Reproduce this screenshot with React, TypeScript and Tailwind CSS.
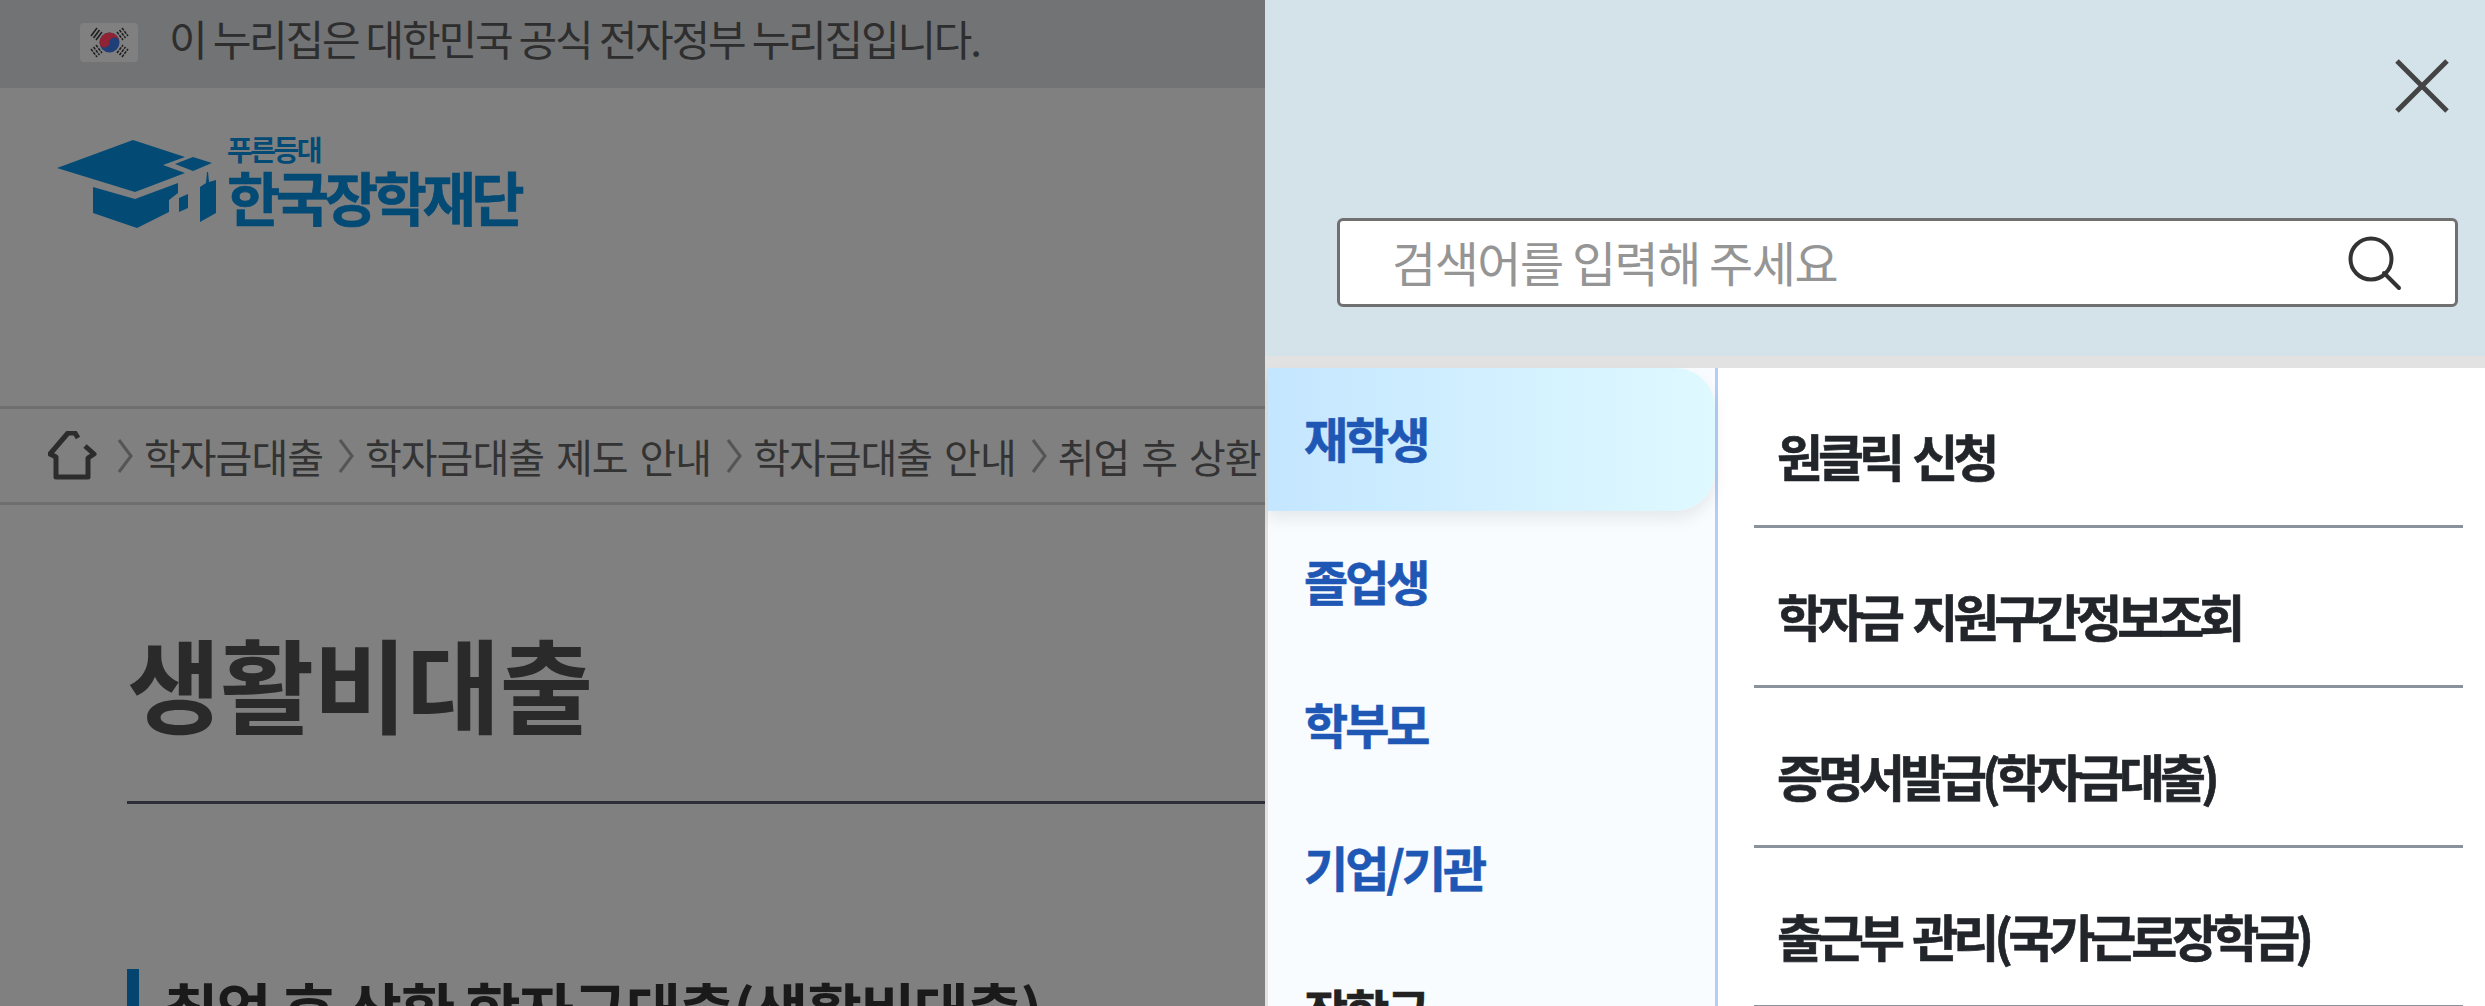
const sideItems = ["재학생", "졸업생", "학부모", "기업/기관", "장학금"]
const links = ["원클릭 신청", "학자금 지원구간정보조회", "증명서발급(학자금대출)", "출근부 관리(국가근로장학금)"]
const crumbs = ["학자금대출", "학자금대출 제도 안내", "학자금대출 안내", "취업 후 상환 학자금대출"]

function Flag() {
  return (
    <div className="w-[58px] h-[39px] mb-[3px] bg-[#808080] rounded-sm flex items-center justify-center">
      <svg viewBox="0 0 57 39" className="w-[57px] h-[39px]">
        <circle cx="28.500" cy="19.500" r="10" fill="#1f3f78" />
        <path d="M18.500 19.500a10 10 0 0 1 20 0c0-3-2.200-5-5-5s-5 2.500-5 5-2.200 5-5 5-5-2-5-5z" fill="#8f2233" />
        <g stroke="#1c1c1c" strokeWidth="1.500">
          <path d="M10 13l6-8M12.500 15l6-8M15 17l6-8" />
          <path d="M36 9l6 8M38.500 7l6 8M41 5l6 8" strokeDasharray="3 1" />
          <path d="M10 26l6 8M12.500 24l6 8M15 22l6 8" strokeDasharray="3 1" />
          <path d="M36 30l6-8M38.500 32l6-8M41 34l6-8" strokeDasharray="3 1" />
        </g>
      </svg>
    </div>
  )
}

function Logo() {
  return (
    <div className="flex items-start gap-[10px] pl-[57px] pt-[52px]">
      <svg viewBox="7 15 160 88" className="w-[160px] h-[88px] fill-[#034a75]">
        <path d="M83 15 L135 32 L113 40 L135 48 L85 67 L7 43 Z" />
        <path d="M143 32 L162 38 L143 46 L125 39 Z" />
        <path d="M43 62 L85 74 L128 58 L128 68 L119 75 L119 87 L87 103 L43 88 Z" />
        <path d="M129 73 L138 69 L138 83 L129 87 Z" />
        <path d="M150 62 L156 58 L157 47 L158 47 L159 57 L166 55 L166 88 L150 97 Z" />
      </svg>
      <div className="flex flex-col text-[#034a75] font-bold leading-none mt-[-8px]">
        <span className="text-[28px] tracking-[-2.500px] h-[36px] leading-[34px]">푸른등대</span>
        <span className="text-[58px] tracking-[-4.500px] leading-[60px] mt-[-2px] [-webkit-text-stroke:0.6px_#034a75]">한국장학재단</span>
      </div>
    </div>
  )
}

function Breadcrumb() {
  return (
    <div className="h-[99px] border-y-[3px] border-[#6f6f6f] flex items-center pl-[48px] whitespace-nowrap overflow-hidden">
      <svg viewBox="8 10 54 50" className="w-[54px] h-[50px] shrink-0 fill-none stroke-[#2c2c2c] stroke-[5]">
        <path d="M38 17 L35 12 L28 12 L10 33 L16 36 L16 56 L48 56 L48 37 L54 33 L45 25" strokeLinejoin="round" />
      </svg>
      {crumbs.map((c) => (
        <div key={c} className="flex items-center shrink-0">
          <svg viewBox="0 0 16 34" className="w-[16px] h-[34px] ml-[15px] mr-[11px] fill-none stroke-[#555555] stroke-[3]">
            <path d="M2 1 L14 17 L2 33" />
          </svg>
          <span className="text-[40px] tracking-[-1px] [word-spacing:4px] text-[#333333]">{c}</span>
        </div>
      ))}
    </div>
  )
}

function DimmedPage() {
  return (
    <div className="w-[1265px] shrink-0 h-full bg-[#808080] overflow-hidden">
      <div className="h-[88px] bg-[#727375] flex items-center pl-[80px] gap-[31px]">
        <Flag />
        <span className="text-[42px] tracking-[-2.200px] mb-[14px] text-[#2e2e2e] whitespace-nowrap">이 누리집은 대한민국 공식 전자정부 누리집입니다.</span>
      </div>
      <div className="h-[318px]">
        <Logo />
      </div>
      <Breadcrumb />
      <div className="pl-[127px]">
        <div className="h-[299px] border-b-[3px] border-[#2e2e38] pt-[117px]">
          <h1 className="text-[102px] font-bold leading-[120px] tracking-[-0.700px] text-[#2a2a2a]">생활비대출</h1>
        </div>
        <div className="mt-[165px] border-l-[12px] border-[#04456f] pl-[24px] h-[60px]">
          <h2 className="text-[60px] font-bold leading-[78px] tracking-[-1.800px] text-[#1a1a1a] whitespace-nowrap">취업 후 상환 학자금대출(생활비대출)</h2>
        </div>
      </div>
    </div>
  )
}

function MenuPanel() {
  return (
    <div className="flex-1 h-full flex flex-col overflow-hidden">
      <div className="h-[356px] bg-[#d4e3ea] shrink-0">
        <div className="flex justify-end pt-[58px] pr-[35px]">
          <svg viewBox="0 0 56 56" className="w-[56px] h-[56px] stroke-[#444444] stroke-[5] fill-none">
            <path d="M3 3 L53 53 M53 3 L3 53" />
          </svg>
        </div>
        <div className="mt-[104px] ml-[72px] mr-[27px] h-[89px] bg-white border-[3px] border-[#707070] rounded-[6px] flex items-center justify-between pl-[52px] pr-[52px]">
          <span className="text-[48px] tracking-[-1.500px] mb-[4px] text-[#959595]">검색어를 입력해 주세요</span>
          <svg viewBox="0 0 56 56" className="w-[56px] h-[56px] stroke-[#333333] stroke-[4] fill-none">
            <circle cx="24" cy="24" r="20.500" />
            <path d="M37 38 L52 53" strokeLinecap="round" />
          </svg>
        </div>
      </div>
      <div className="h-[12px] bg-[#e2e2e2] shrink-0" />
      <div className="flex flex-1 min-h-0 bg-white">
        <div className="w-[453px] shrink-0 border-l-[3px] border-l-[#e2e2e2] border-r-[3px] border-r-[#b3cdf5] bg-[#f8fcff]">
          {sideItems.map((s, i) => (
            <div
              key={s}
              className={
                i === 0
                  ? "h-[143px] pl-[36px] pt-[39px] text-[48px] font-bold tracking-[-3px] leading-[60px] [-webkit-text-stroke:0.6px] text-[#1f57b5] bg-gradient-to-r from-[#c4e6ff] to-[#dff9ff] rounded-r-[40px] shadow-[0_8px_16px_rgba(0,0,0,0.08)]"
                  : i === 4
                    ? "h-[143px] pl-[36px] pt-[39px] text-[48px] font-bold tracking-[-3px] leading-[60px] [-webkit-text-stroke:0.6px] text-[#222222]"
                    : "h-[143px] pl-[36px] pt-[39px] text-[48px] font-bold tracking-[-3px] leading-[60px] [-webkit-text-stroke:0.6px] text-[#1f57b5]"
              }
            >
              {s}
            </div>
          ))}
        </div>
        <div className="flex-1 pl-[36px] pr-[22px]">
          {links.map((l) => (
            <div key={l} className="h-[160px] border-b-[3px] border-[#8a939d] pl-[23px] pt-[57px] text-[50px] font-bold leading-[60px] tracking-[-5px] [word-spacing:6px] [-webkit-text-stroke:0.6px] text-[#22252a] whitespace-nowrap">
              {l}
            </div>
          ))}
        </div>
      </div>
    </div>
  )
}

export default function App() {
  return (
    <div className="w-full h-[1006px] flex overflow-hidden font-['Noto_Sans_CJK_KR','Noto_Sans',sans-serif]">
      <DimmedPage />
      <MenuPanel />
    </div>
  )
}
